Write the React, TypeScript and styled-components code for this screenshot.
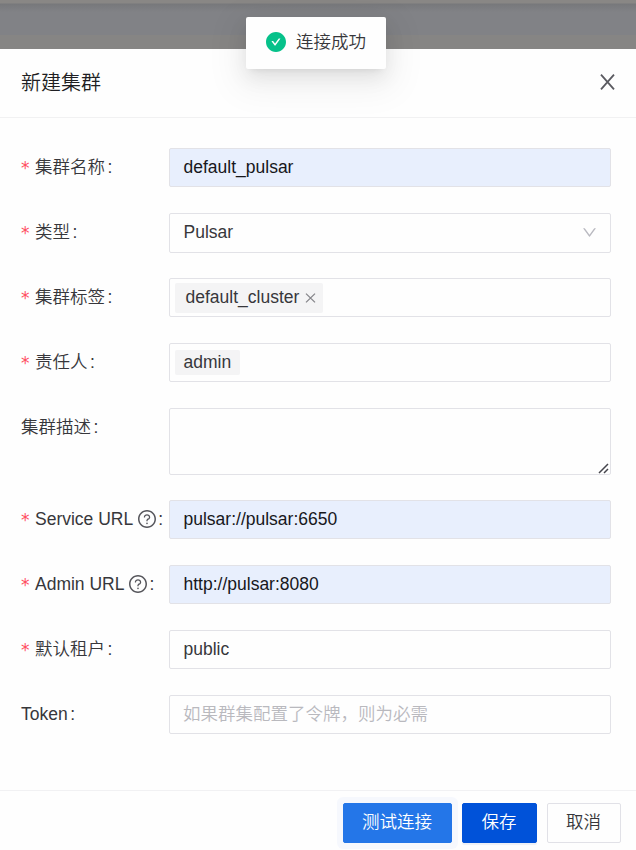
import React from "react";
import styled, { createGlobalStyle } from "styled-components";

const GlobalStyle = createGlobalStyle`
  * { box-sizing: border-box; }
  body {
    margin: 0;
    overflow: hidden;
    background: #fefefe;
    color: #37373b;
    font: 350 17.5px/27.5px "Liberation Sans", "Noto Sans CJK SC DemiLight", "Noto Sans CJK SC", sans-serif;
  }
`;

const Page = styled.div`
  display: flex;
  flex-direction: column;
  height: 850px;
  position: relative;
`;

const Backdrop = styled.div`
  flex: 0 0 49px;
  background: linear-gradient(#898785 0 3px, #77787b 4px, #818286 12px, #818286 35px, #868584 35px);
`;

const Panel = styled.section`
  flex: 1;
  display: flex;
  flex-direction: column;
  background: #fefefe;
`;

const Header = styled.header`
  display: flex;
  align-items: center;
  justify-content: space-between;
  flex: 0 0 69px;
  padding: 0 21px 2px 21px;
  border-bottom: 1px solid #f1f1f2;
`;

const Title = styled.h1`
  margin: 0;
  padding-top: 2px;
  font-size: 20px;
  font-weight: 350;
  line-height: 28px;
  color: #1f1f23;
`;

const IconButton = styled.button`
  display: flex;
  padding: 0;
  border: 0;
  background: none;
  color: #5a5a60;
`;

const Form = styled.form`
  flex: 1;
  display: flex;
  flex-direction: column;
  gap: 26px;
  padding: 30px 25px 0 21px;
`;

const Row = styled.div<{ $height?: number }>`
  display: grid;
  grid-template-columns: 148px 1fr;
  align-items: start;
  height: ${(p) => p.$height ?? 39}px;
`;

const Label = styled.label`
  display: flex;
  align-items: center;
  height: 40px;
  white-space: nowrap;
`;

const Required = styled.span`
  width: 9px;
  margin-right: 5px;
  font: 17px/20px "DejaVu Sans", sans-serif;
  color: #ff4d5e;
`;

const Colon = styled.span`
  margin-left: 2.5px;
`;

const Help = styled.span`
  display: flex;
  margin: -2px 0 0 5px;
  color: #55555b;

  & + ${Colon} { margin-left: 2px; }
`;

const Control = styled.div<{ $filled?: boolean; $tags?: boolean; $height?: number }>`
  display: flex;
  align-items: center;
  justify-content: space-between;
  height: ${(p) => p.$height ?? 39}px;
  padding: 0.5px ${(p) => (p.$tags ? 5 : 13.5)}px 0;
  border: 1px solid #e2e2e7;
  border-radius: 2px;
  background: ${(p) => (p.$filled ? "#e8effd" : "#fefefe")};
  color: ${(p) => (p.$filled ? "#17171b" : "#37373b")};
`;

const SelectBox = styled(Control)`
  padding-bottom: 1px;
`;

const Arrow = styled.span`
  display: flex;
  margin-right: -1px;
  color: #b9b9c0;
`;

const Placeholder = styled.span`
  margin-left: -0.5px;
  color: #b9b9be;
`;

const Tag = styled.span<{ $compact?: boolean }>`
  display: flex;
  align-items: center;
  gap: 6px;
  height: ${(p) => (p.$compact ? 25 : 30)}px;
  padding: ${(p) => (p.$compact ? "0 8.5px" : "0 6.5px 0 10.5px")};
  border-radius: 2px;
  background: #f4f4f5;
`;

const TagClose = styled.span`
  display: flex;
  color: #85858a;
`;

const TextArea = styled(Control)`
  align-items: flex-end;
  justify-content: flex-end;
  padding: 0 1px 0;
  color: #45454c;
`;

const Footer = styled.footer`
  display: flex;
  justify-content: flex-end;
  gap: 10px;
  flex: 0 0 60px;
  padding: 12px 15px 0;
  border-top: 1px solid #f1f1f3;
`;

const palette = {
  active: "background: #2476e8; border-color: #2476e8; color: #fff; box-shadow: 0 0 0 6px #f6f8fd, 0 3px 3px #e3e7f0;",
  primary: "background: #0052d9; border-color: #0052d9; color: #fff; box-shadow: 0 2px 1px #eef0f5;",
  plain: "background: #fefefe; border-color: #e1e1e7; color: #37373b;",
};

const Button = styled.button<{ $kind: keyof typeof palette; $width: number }>`
  width: ${(p) => p.$width}px;
  height: 40px;
  padding: 0 1px 0 0;
  border: 1px solid;
  border-radius: 2px;
  font: inherit;
  ${(p) => palette[p.$kind]}
`;

const Toast = styled.div`
  position: absolute;
  top: 17px;
  left: 246px;
  display: flex;
  align-items: center;
  gap: 10px;
  width: 140px;
  height: 52px;
  padding: 0 20px 1px;
  border-radius: 2px;
  background: #fefefe;
  box-shadow: 0 4px 8px -5px rgba(0, 0, 0, 0.12), 0 8px 20px rgba(0, 0, 0, 0.08), 0 11px 35px 10px rgba(0, 0, 0, 0.05);
`;

const ToastIcon = styled.span`
  display: flex;
  margin-top: -1px;
  color: #06c18a;
`;

const paths = {
  down: "M884 256h-75c-5.1 0-9.9 2.5-12.9 6.6L512 654.2 227.9 262.6c-3-4.1-7.8-6.6-12.9-6.6h-75c-6.5 0-10.3 7.4-6.5 12.7l352.6 486.1c12.8 17.6 39 17.6 51.7 0l352.6-486.1c3.9-5.3.1-12.7-6.4-12.7z",
  check: "M512 64C264.6 64 64 264.6 64 512s200.6 448 448 448 448-200.6 448-448S759.4 64 512 64zm193.5 301.7l-210.6 292a31.8 31.8 0 01-51.7 0L318.5 484.9c-3.8-5.3 0-12.7 6.5-12.7h46.9c10.2 0 19.9 4.9 25.9 13.3l71.2 98.8 157.2-218c6-8.3 15.6-13.3 25.9-13.3H699c6.5 0 10.3 7.4 6.5 12.7z",
  help: "M512 64C264.6 64 64 264.6 64 512s200.6 448 448 448 448-200.6 448-448S759.4 64 512 64zm0 820c-205.4 0-372-166.6-372-372s166.6-372 372-372 372 166.6 372 372-166.6 372-372 372zM623.6 316.7C593.6 290.4 554 276 512 276s-81.6 14.5-111.6 40.7C369.2 344 352 380.7 352 420v7.6c0 4.4 3.6 8 8 8h48c4.4 0 8-3.6 8-8V420c0-44.1 43.1-80 96-80s96 35.9 96 80c0 31.1-22 59.6-56.1 72.7-21.2 8.1-39.2 22.3-52.1 40.9-13.1 19-19.9 41.8-19.9 64.9V620c0 4.4 3.6 8 8 8h48c4.4 0 8-3.6 8-8v-22.7a48.3 48.3 0 0130.9-44.8c59-22.7 97.1-74.7 97.1-132.5.1-39.3-17.1-76-48.3-103.3zM472 732a40 40 0 1080 0 40 40 0 10-80 0z",
};

const Icon = ({ name, size }: { name: keyof typeof paths; size: number }) => (
  <svg width={size} height={size} viewBox={name === "down" ? "0 0 1024 1024" : "64 64 896 896"} fill="currentColor" aria-hidden="true">
    <path d={paths[name]} />
  </svg>
);

const Cross = ({ width, height, weight }: { width: number; height: number; weight: number }) => (
  <svg width={width} height={height} viewBox={`0 0 ${width} ${height}`} fill="none" stroke="currentColor" strokeWidth={weight} aria-hidden="true">
    <path d={`M1 .6 ${width - 1} ${height - 0.6}M${width - 1} .6 1 ${height - 0.6}`} />
  </svg>
);

interface FieldProps {
  label: string;
  required?: boolean;
  help?: boolean;
  height?: number;
  children: React.ReactNode;
}

const Field = ({ label, required, help, height, children }: FieldProps) => (
  <Row $height={height}>
    <Label>
      {required && <Required>*</Required>}
      {label}
      {help && <Help><Icon name="help" size={18} /></Help>}
      <Colon>:</Colon>
    </Label>
    {children}
  </Row>
);

export default function App() {
  return (
    <Page>
      <GlobalStyle />
      <Backdrop />
      <Panel>
        <Header>
          <Title>新建集群</Title>
          <IconButton type="button" aria-label="关闭"><Cross width={15} height={16} weight={1.8} /></IconButton>
        </Header>
        <Form>
          <Field label="集群名称" required><Control $filled>default_pulsar</Control></Field>
          <Field label="类型" required>
            <SelectBox $height={40}>Pulsar<Arrow><Icon name="down" size={17} /></Arrow></SelectBox>
          </Field>
          <Field label="集群标签" required>
            <Control $tags>
              <Tag>default_cluster<TagClose><Cross width={11} height={10} weight={1.3} /></TagClose></Tag>
            </Control>
          </Field>
          <Field label="责任人" required><Control $tags><Tag $compact>admin</Tag></Control></Field>
          <Field label="集群描述" height={66}>
            <TextArea $height={67}>
              <svg width="11" height="11" viewBox="0 0 11 11" fill="none" stroke="currentColor" strokeWidth="1.5">
                <path d="M1 10 10 1M6 10 10 6" />
              </svg>
            </TextArea>
          </Field>
          <Field label="Service URL" required help><Control $filled>pulsar://pulsar:6650</Control></Field>
          <Field label="Admin URL" required help><Control $filled>http://pulsar:8080</Control></Field>
          <Field label="默认租户" required><Control>public</Control></Field>
          <Field label="Token"><Control><Placeholder>如果群集配置了令牌，则为必需</Placeholder></Control></Field>
        </Form>
        <Footer>
          <Button type="button" $kind="active" $width={109}>测试连接</Button>
          <Button type="button" $kind="primary" $width={75}>保存</Button>
          <Button type="button" $kind="plain" $width={74}>取消</Button>
        </Footer>
      </Panel>
      <Toast><ToastIcon><Icon name="check" size={20} /></ToastIcon>连接成功</Toast>
    </Page>
  );
}
